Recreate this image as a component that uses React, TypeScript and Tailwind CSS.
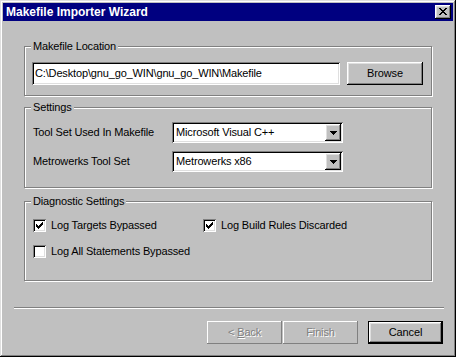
import React from "react";

const raised =
  "shadow-[inset_-1px_-1px_0_#000,inset_1px_1px_0_#fff,inset_-2px_-2px_0_#808080,inset_2px_2px_0_#dfdfdf]";
const sunken =
  "shadow-[inset_1px_1px_0_#808080,inset_-1px_-1px_0_#fff,inset_2px_2px_0_#000,inset_-2px_-2px_0_#dfdfdf]";
const groupBox =
  "border border-[#808080] shadow-[inset_1px_1px_0_#fff,1px_1px_0_#fff] mx-[21px] pl-[7px] pr-[8px]";

function Legend({ children }: { children: React.ReactNode }) {
  return <legend className="-ml-[1px] px-[2px] leading-[13px] bg-[#c0c0c0]">{children}</legend>;
}

function Dropdown({ value }: { value: string }) {
  return (
    <div className={`w-[171px] h-[21px] bg-white ${sunken} flex items-center p-[2px]`}>
      <span className="flex-1 pl-[2px] leading-[13px]">{value}</span>
      <span className={`w-[16px] h-[17px] bg-[#c0c0c0] ${raised} flex items-center justify-center`}>
        <svg width="7" height="4" viewBox="0 0 7 4" shapeRendering="crispEdges">
          <path d="M0 0h7v1h-7z M1 1h5v1h-5z M2 2h3v1h-3z M3 3h1v1h-1z" fill="#000" />
        </svg>
      </span>
    </div>
  );
}

function CheckBox({ checked, label }: { checked: boolean; label: string }) {
  return (
    <label className="flex items-center pl-[1px]">
      <span className={`w-[13px] h-[13px] bg-white ${sunken} flex items-center justify-center shrink-0`}>
        {checked && (
          <svg width="7" height="7" viewBox="0 0 7 7" shapeRendering="crispEdges">
            <path
              d="M6 0h1v1h-1z M5 1h2v1h-2z M0 2h1v1h-1z M4 2h3v1h-3z M0 3h2v1h-2z M3 3h3v1h-3z M0 4h5v1h-5z M1 5h3v1h-3z M2 6h1v1h-1z"
              fill="#000"
            />
          </svg>
        )}
      </span>
      <span className="ml-[5px] leading-[13px]">{label}</span>
    </label>
  );
}

export default function App() {
  return (
    <div className="w-[456px] h-[357px] bg-[#c0c0c0] p-[3px] flex flex-col text-[11px] leading-[13px] tracking-[-0.15px] text-black [font-family:'Liberation_Sans',Arial,sans-serif] shadow-[inset_-1px_-1px_0_#000,inset_1px_1px_0_#dfdfdf,inset_-2px_-2px_0_#808080,inset_2px_2px_0_#fff]">
      {/* title bar */}
      <div className="h-[18px] bg-[#000080] flex items-center justify-between pl-[3px] pr-[2px]">
        <span className="text-white font-bold text-[12px] tracking-normal">Makefile Importer Wizard</span>
        <span className={`w-[16px] h-[14px] bg-[#c0c0c0] ${raised} flex items-start pl-[4px] pt-[3px]`}>
          <svg width="8" height="7" viewBox="0 0 8 7" shapeRendering="crispEdges">
            <path
              d="M0 0h2v1h-2z M6 0h2v1h-2z M1 1h2v1h-2z M5 1h2v1h-2z M2 2h4v1h-4z M3 3h2v1h-2z M2 4h4v1h-4z M1 5h2v1h-2z M5 5h2v1h-2z M0 6h2v1h-2z M6 6h2v1h-2z"
              fill="#000"
            />
          </svg>
        </span>
      </div>

      <fieldset className={`${groupBox} mt-[19px] pt-[9px] pb-[10px]`}>
        <Legend>Makefile Location</Legend>
        <div className="flex items-center gap-[7px]">
          <div className={`w-[308px] h-[23px] bg-white ${sunken} flex items-center pl-[3px]`}>
            C:\Desktop\gnu_go_WIN\gnu_go_WIN\Makefile
          </div>
          <button className={`w-[76px] h-[23px] bg-[#c0c0c0] ${raised} flex items-center justify-center`}>
            Browse
          </button>
        </div>
      </fieldset>

      <fieldset className={`${groupBox} mt-[5px] pt-[8px] pb-[15px] flex flex-col gap-[8px]`}>
        <Legend>Settings</Legend>
        <div className="flex items-center">
          <span className="w-[140px] pl-[1px]">Tool Set Used In Makefile</span>
          <Dropdown value="Microsoft Visual C++" />
        </div>
        <div className="flex items-center">
          <span className="w-[140px] pl-[1px]">Metrowerks Tool Set</span>
          <Dropdown value="Metrowerks x86" />
        </div>
      </fieldset>

      <fieldset className={`${groupBox} mt-[7px] pt-[11px] pb-[22px] flex flex-col gap-[13px]`}>
        <Legend>Diagnostic Settings</Legend>
        <div className="flex items-center">
          <div className="w-[170px]">
            <CheckBox checked label="Log Targets Bypassed" />
          </div>
          <CheckBox checked label="Log Build Rules Discarded" />
        </div>
        <CheckBox checked={false} label="Log All Statements Bypassed" />
      </fieldset>

      <div className="mt-[26px] ml-[11px] w-[430px] h-[2px] border-t border-[#808080] border-b border-b-white" />

      <div className="mt-[12px] flex justify-end pr-[10px]">
        <button className="w-[75px] h-[23px] bg-[#c0c0c0] shadow-[inset_-1px_-1px_0_#808080,inset_1px_1px_0_#fff] flex items-center justify-center text-[#808080] [text-shadow:1px_1px_0_#fff]">
          &lt; <span className="underline ml-[3px]">B</span>ack
        </button>
        <button className="w-[75px] h-[23px] ml-[1px] bg-[#c0c0c0] shadow-[inset_-1px_-1px_0_#808080,inset_1px_1px_0_#fff] flex items-center justify-center text-[#808080] [text-shadow:1px_1px_0_#fff]">
          Finish
        </button>
        <button className={`w-[75px] h-[23px] ml-[10px] bg-[#c0c0c0] border border-black ${raised} flex items-center justify-center`}>
          Cancel
        </button>
      </div>
    </div>
  );
}
